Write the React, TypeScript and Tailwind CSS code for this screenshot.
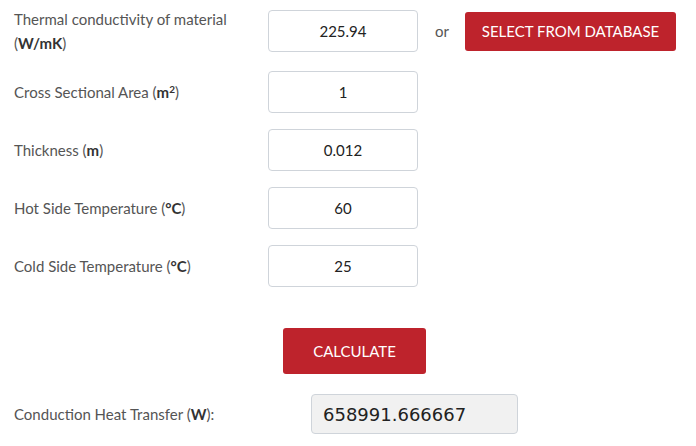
import React from "react";

const font = { fontFamily: "Lato, 'Open Sans', sans-serif" };

function Row({ label, value, extra, cls }: { label: React.ReactNode; value: string; extra?: React.ReactNode; cls: string }) {
  return (
    <div className={`flex items-center ${cls}`}>
      <div className="w-[254px] text-[15px] leading-[24px] text-[#555]">{label}</div>
      <div className="w-[150px] h-[42px] border border-[#cfd4da] rounded-[4px] flex items-center justify-center text-[15px] text-[#222]">
        {value}
      </div>
      {extra}
    </div>
  );
}

export default function App() {
  const B = (s: React.ReactNode) => <b className="font-bold text-[#333]">{s}</b>;
  return (
    <div className="w-[696px] h-[446px] bg-white pl-[14px] pt-[10px]" style={font}>
      <Row
        cls="h-[42px]"
        label={<>Thermal conductivity of material<br />({B("W/mK")})</>}
        value="225.94"
        extra={
          <>
            <span className="ml-[17px] text-[15px] text-[#555]">or</span>
            <button className="ml-[16px] w-[211px] h-[39px] bg-[#be232c] rounded-[3px] text-white text-[15px]">
              SELECT FROM DATABASE
            </button>
          </>
        }
      />
      <Row cls="mt-[19px]" label={<>Cross Sectional Area ({B(<>m<sup className="text-[10px]">2</sup></>)})</>} value="1" />
      <Row cls="mt-[16px]" label={<>Thickness ({B("m")})</>} value="0.012" />
      <Row cls="mt-[16px]" label={<>Hot Side Temperature ({B("°C")})</>} value="60" />
      <Row cls="mt-[16px]" label={<>Cold Side Temperature ({B("°C")})</>} value="25" />
      <div className="mt-[41px] ml-[269px]">
        <button className="w-[143px] h-[46px] bg-[#be232c] rounded-[3px] text-white text-[15px]">CALCULATE</button>
      </div>
      <div className="flex items-center mt-[20px]">
        <div className="w-[297px] text-[15px] text-[#555]">Conduction Heat Transfer ({B("W")}):</div>
        <div
          className="w-[207px] h-[40px] bg-[#f1f1f1] border border-[#cfd4da] rounded-[4px] flex items-center pl-[11px] text-[18px] text-[#222]"
          style={{ fontFamily: "'DejaVu Sans', sans-serif" }}
        >
          658991.666667
        </div>
      </div>
    </div>
  );
}
